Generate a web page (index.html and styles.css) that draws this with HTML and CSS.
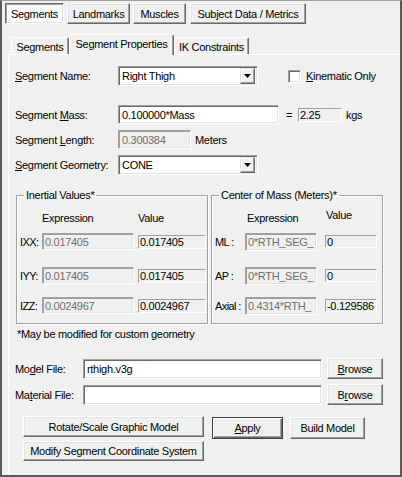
FILE: index.html
```html
<!DOCTYPE html>
<html>
<head>
<meta charset="utf-8">
<link rel="stylesheet" href="styles.css">
</head>
<body>
<div class="window">
  <div class="toptabs">
    <div class="tbtn pressed w-seg">Segments</div>
    <div class="tbtn w-land">Landmarks</div>
    <div class="tbtn w-mus">Muscles</div>
    <div class="tbtn w-subj">Subject Data / Metrics</div>
  </div>
  <div class="tabctl">
    <div class="tabstrip">
      <div class="tab t-seg">Segments</div>
      <div class="tab active t-props">Segment Properties</div>
      <div class="tab t-ik">IK Constraints</div>
    </div>
    <div class="panel">
      <div class="row r-name">
        <span class="lbl"><u>S</u>egment Name:</span>
        <div class="combo"><span class="combo-text">Right Thigh</span><span class="dd"><svg width="7" height="4" viewBox="0 0 7 4"><path d="M0 0h7L3.5 4z" fill="#000"/></svg></span></div>
        <div class="check"><span class="cbox"></span><span><u>K</u>inematic Only</span></div>
      </div>
      <div class="row r-mass">
        <span class="lbl">Segment <u>M</u>ass:</span>
        <div class="edit mass">0.100000*Mass</div>
        <span class="eq">=</span>
        <div class="static kg">2.25</div>
        <span class="unit">kgs</span>
      </div>
      <div class="row r-len">
        <span class="lbl">Segment <u>L</u>ength:</span>
        <div class="edit disabled len">0.300384</div>
        <span class="unit">Meters</span>
      </div>
      <div class="row r-geom">
        <span class="lbl"><u>S</u>egment Geometry:</span>
        <div class="combo"><span class="combo-text">CONE</span><span class="dd"><svg width="7" height="4" viewBox="0 0 7 4"><path d="M0 0h7L3.5 4z" fill="#000"/></svg></span></div>
      </div>
      <div class="groups">
        <fieldset class="grp inertial">
          <legend>Inertial Values*</legend>
          <div class="ghead"><span class="h-expr">Expression</span><span class="h-val">Value</span></div>
          <div class="grow g1"><span class="glbl">IXX:</span><div class="edit disabled gexpr">0.017405</div><div class="static gval">0.017405</div></div>
          <div class="grow g2"><span class="glbl">IYY:</span><div class="edit disabled gexpr">0.017405</div><div class="static gval">0.017405</div></div>
          <div class="grow g3"><span class="glbl">IZZ:</span><div class="edit disabled gexpr">0.0024967</div><div class="static gval">0.0024967</div></div>
        </fieldset>
        <fieldset class="grp com">
          <legend>Center of Mass (Meters)*</legend>
          <div class="ghead"><span class="h-expr">Expression</span><span class="h-val">Value</span></div>
          <div class="grow g1"><span class="glbl">ML :</span><div class="edit disabled gexpr">0*RTH_SEG_</div><div class="static gval">0</div></div>
          <div class="grow g2"><span class="glbl">AP :</span><div class="edit disabled gexpr">0*RTH_SEG_</div><div class="static gval">0</div></div>
          <div class="grow g3"><span class="glbl">Axial :</span><div class="edit disabled gexpr">0.4314*RTH_</div><div class="static gval">-0.129586</div></div>
        </fieldset>
      </div>
      <div class="note">*May be modified for custom geometry</div>
      <div class="row r-file r-model">
        <span class="flbl">Mo<u>d</u>el File:</span>
        <div class="edit file">rthigh.v3g</div>
        <div class="btn browse"><span><u>B</u>rowse</span></div>
      </div>
      <div class="row r-file r-mat">
        <span class="flbl">Ma<u>t</u>erial File:</span>
        <div class="edit file"></div>
        <div class="btn browse"><span>B<u>r</u>owse</span></div>
      </div>
      <div class="actions">
        <div class="col">
          <div class="btn wide b-rot">Rotate/Scale Graphic Model</div>
          <div class="btn wide b-mod">Modify Segment Coordinate System</div>
        </div>
        <div class="btn default b-apply"><span><u>A</u>pply</span></div>
        <div class="btn b-build">Build Model</div>
      </div>
    </div>
  </div>
</div>
</body>
</html>
```

FILE: styles.css
```css
* { box-sizing: border-box; }
html, body { margin: 0; padding: 0; background: #f0f0f0; }
body {
  font-family: "Liberation Sans", Arial, sans-serif;
  font-size: 11px;
  letter-spacing: -0.3px;
  color: #000;
}
u { text-decoration: underline; text-underline-offset: 1px; }

.window {
  width: 402px;
  height: 477px;
  overflow: hidden;
  background: #f0f0f0;
  border-top: 1px solid #a0a0a0;
  border-left: 2px solid #5a5a5a;
  border-right: 2px solid #5a5a5a;
  border-bottom: 2px solid #5a5a5a;
}

/* top button-style tabs */
.toptabs {
  display: flex;
  padding: 2px 0 0 3px;
  height: 23px;
}
.tbtn {
  height: 21px;
  display: flex;
  align-items: center;
  justify-content: center;
  background: #f0f0f0;
  border: 1px solid;
  border-color: #fff #696969 #696969 #fff;
  box-shadow: inset -1px -1px #a0a0a0, inset 1px 1px #e3e3e3;
  margin-right: 3px;
}
.tbtn.pressed {
  border-color: #696969 #fff #fff #696969;
  box-shadow: inset 1px 1px #a0a0a0, inset -1px -1px #e3e3e3;
  background: #fbfbfb;
}
.w-seg { width: 59px; }
.w-land { width: 63px; }
.w-mus { width: 53px; margin-right: 4px; }
.w-subj { width: 116px; }

/* property tab control */
.tabctl {
  margin: 10px 0 0 6px;
  width: 400px;
}
.tabstrip {
  display: flex;
  align-items: flex-end;
  height: 20px;
  padding-left: 3px;
}
.tab {
  height: 17px;
  display: flex;
  align-items: center;
  justify-content: center;
  background: #f0f0f0;
  border-top: 1px solid #fff;
  border-left: 1px solid #fff;
  border-right: 1px solid #696969;
  box-shadow: inset -1px 0 #a0a0a0;
  border-radius: 2px 2px 0 0;
}
.t-seg { width: 58px; padding-top: 2px; }
.t-ik { width: 75px; padding-top: 2px; }
.tab.active {
  width: 105px;
  height: 21px;
  margin-bottom: -1px;
  position: relative;
  z-index: 1;
  padding-bottom: 2px;
}
.panel {
  border-top: 1px solid #fff;
  border-left: 1px solid #fff;
  padding-left: 6px;
  height: 430px;
}

.row {
  display: flex;
  align-items: center;
}
.lbl { width: 103px; flex: none; }
.r-name { margin-top: 11px; height: 20px; }
.r-mass { margin-top: 19px; height: 19px; }
.r-len { margin-top: 6px; height: 19px; }
.r-geom { margin-top: 6px; height: 20px; }

/* sunken edit */
.edit {
  background: #fff;
  border: 1px solid;
  border-color: #a0a0a0 #fff #fff #a0a0a0;
  box-shadow: inset 1px 1px #696969, inset -1px -1px #e3e3e3;
  display: flex;
  align-items: center;
  padding-left: 3px;
  white-space: nowrap;
  overflow: hidden;
}
.edit.disabled {
  background: #f0f0f0;
  color: #6d6d6d;
  box-shadow: inset 1px 1px #a0a0a0, inset -1px -1px #e3e3e3;
}
.static {
  background: #f0f0f0;
  border: 1px solid;
  border-color: #a0a0a0 #fff #fff #a0a0a0;
  display: flex;
  align-items: center;
  padding-left: 1px;
  white-space: nowrap;
  overflow: hidden;
}

.combo {
  width: 140px;
  height: 20px;
  background: #fff;
  border: 1px solid;
  border-color: #a0a0a0 #fff #fff #a0a0a0;
  box-shadow: inset 1px 1px #696969, inset -1px -1px #e3e3e3;
  display: flex;
  align-items: center;
  padding: 0 2px 0 3px;
}
.combo-text { flex: 1; }
.dd {
  width: 15px;
  height: 16px;
  background: #f0f0f0;
  border: 1px solid;
  border-color: #e3e3e3 #696969 #696969 #e3e3e3;
  box-shadow: inset -1px -1px #a0a0a0, inset 1px 1px #fff;
  display: flex;
  align-items: center;
  justify-content: center;
}
.dd svg { display: block; }

.check {
  display: flex;
  align-items: center;
  margin-left: 30px;
}
.cbox {
  width: 13px;
  height: 13px;
  background: #fff;
  border: 1px solid;
  border-color: #a0a0a0 #fff #fff #a0a0a0;
  box-shadow: inset 1px 1px #696969, inset -1px -1px #e3e3e3;
  margin-right: 5px;
}

.mass { width: 161px; height: 19px; }
.eq { margin-left: 7px; width: 12px; }
.kg { width: 44px; height: 14px; }
.unit { margin-left: 4px; }
.len { width: 73px; height: 19px; }

/* group boxes */
.groups {
  display: flex;
  margin-top: 14px;
  padding-left: 1px;
}
.grp {
  margin: 0;
  padding: 0 0 9px 3px;
  border: 1px solid #a0a0a0;
  box-shadow: inset 1px 1px #fff, 1px 1px #fff;
  min-width: 0;
}
.grp legend {
  padding: 0 2px;
  margin-left: 4px;
  line-height: 13px;
}
.inertial { width: 192px; }
.com { width: 172px; margin-left: 3px; }
.ghead {
  display: flex;
  margin-top: 10px;
  height: 13px;
  line-height: 13px;
}
.grow {
  display: flex;
  align-items: center;
  height: 17px;
}
.g1 { margin-top: 8px; }
.g2 { margin-top: 17px; }
.g3 { margin-top: 13px; }
.glbl { flex: none; }
.gexpr { height: 17px; flex: none; padding-left: 2px; }
.gval { height: 14px; flex: none; }

.inertial .h-expr { margin-left: 22px; width: 96px; }
.inertial .glbl { width: 22px; letter-spacing: -0.6px; }
.inertial .gexpr { width: 92px; }
.inertial .gval { width: 68px; margin-left: 4px; }

.com .h-expr { margin-left: 32px; width: 79px; }
.com .h-val { margin-top: -3px; }
.com .glbl { width: 30px; letter-spacing: -0.6px; }
.com .gexpr { width: 72px; height: 18px; }
.com .gval { width: 52px; margin-left: 8px; height: 13px; }

.note {
  margin-top: 4px;
  margin-left: 2px;
  line-height: 13px;
}

.r-file { height: 21px; }
.r-model { margin-top: 17px; }
.r-mat { margin-top: 5px; }
.flbl { width: 68px; flex: none; }
.file { width: 239px; height: 20px; }

/* buttons */
.btn {
  background: #f0f0f0;
  border: 1px solid;
  border-color: #fff #696969 #696969 #fff;
  box-shadow: inset -1px -1px #a0a0a0, inset 1px 1px #e3e3e3;
  display: flex;
  align-items: center;
  justify-content: center;
  white-space: nowrap;
}
.browse { width: 56px; height: 21px; margin-left: 5px; }
.actions {
  display: flex;
  align-items: flex-start;
  margin-top: 11px;
  margin-left: 8px;
}
.col { display: flex; flex-direction: column; gap: 4px; }
.wide { width: 181px; }
.b-rot { height: 21px; }
.b-mod { height: 20px; }
.b-apply {
  width: 71px;
  height: 22px;
  margin-left: 8px;
  margin-top: 1px;
  border: 1px solid #404040;
  box-shadow: inset 1px 1px #fff, inset -1px -1px #696969, inset -2px -2px #a0a0a0;
}
.b-build { width: 75px; height: 22px; margin-left: 7px; margin-top: 1px; }
```
